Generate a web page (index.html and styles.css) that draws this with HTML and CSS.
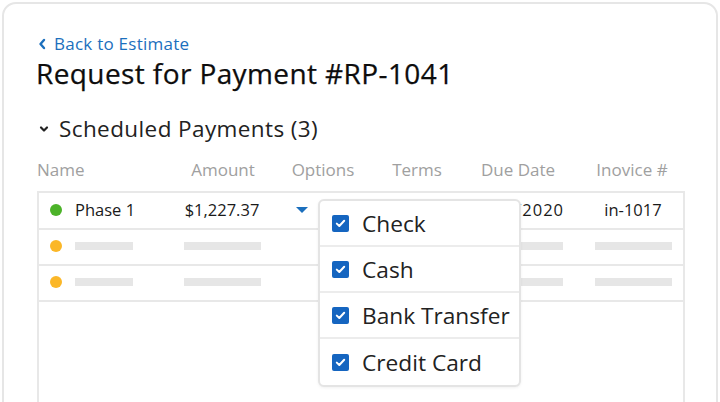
FILE: index.html
```html
<!DOCTYPE html>
<html>
<head>
<meta charset="utf-8">
<link rel="stylesheet" href="styles.css">
</head>
<body>
<div class="card">
  <a class="back"><svg class="back-ico" width="8" height="12" viewBox="0 0 8 12"><path d="M6 2 L2.5 6 L6 10" fill="none" stroke="#1b6fbd" stroke-width="2.4" stroke-linecap="round" stroke-linejoin="round"/></svg>Back to Estimate</a>
  <h1 class="title">Request for Payment #RP-1041</h1>
  <div class="section"><svg class="sec-ico" width="10" height="8" viewBox="0 0 10 8"><path d="M2 2.5 L5 5.5 L8 2.5" fill="none" stroke="#222" stroke-width="2.2" stroke-linecap="round" stroke-linejoin="round"/></svg>Scheduled Payments (3)</div>
  <div class="thead">
    <span class="h-name">Name</span>
    <span class="h-amt">Amount</span>
    <span class="h-opt">Options</span>
    <span class="h-terms">Terms</span>
    <span class="h-due">Due Date</span>
    <span class="h-inv">Inovice #</span>
  </div>
  <div class="table">
    <div class="row">
      <span class="c-name"><i class="dot green"></i>Phase 1</span>
      <span class="c-amt">$1,227.37</span>
      <span class="c-opt"><i class="tri"></i></span>
      <span class="c-due"><span class="due-text">01/01/2020</span></span>
      <span class="c-inv">in-1017</span>
    </div>
    <div class="row">
      <span class="c-name"><i class="dot yellow"></i><i class="bar b1"></i></span>
      <span class="c-amt"><i class="bar b2"></i></span>
      <span class="c-opt"></span>
      <span class="c-due"><i class="bar b3"></i></span>
      <span class="c-inv"><i class="bar b4"></i></span>
    </div>
    <div class="row">
      <span class="c-name"><i class="dot yellow"></i><i class="bar b1"></i></span>
      <span class="c-amt"><i class="bar b2"></i></span>
      <span class="c-opt"></span>
      <span class="c-due"><i class="bar b3"></i></span>
      <span class="c-inv"><i class="bar b4"></i></span>
    </div>
    <div class="menu">
      <div class="item"><i class="cb"><svg width="11" height="9" viewBox="0 0 11 9"><path d="M1.8 4.6 L4.3 7 L9.2 1.8" fill="none" stroke="#fff" stroke-width="2" stroke-linecap="round" stroke-linejoin="round"/></svg></i>Check</div>
      <div class="item"><i class="cb"><svg width="11" height="9" viewBox="0 0 11 9"><path d="M1.8 4.6 L4.3 7 L9.2 1.8" fill="none" stroke="#fff" stroke-width="2" stroke-linecap="round" stroke-linejoin="round"/></svg></i>Cash</div>
      <div class="item"><i class="cb"><svg width="11" height="9" viewBox="0 0 11 9"><path d="M1.8 4.6 L4.3 7 L9.2 1.8" fill="none" stroke="#fff" stroke-width="2" stroke-linecap="round" stroke-linejoin="round"/></svg></i>Bank Transfer</div>
      <div class="item"><i class="cb"><svg width="11" height="9" viewBox="0 0 11 9"><path d="M1.8 4.6 L4.3 7 L9.2 1.8" fill="none" stroke="#fff" stroke-width="2" stroke-linecap="round" stroke-linejoin="round"/></svg></i>Credit Card</div>
    </div>
  </div>
</div>
</body>
</html>
```
FILE: styles.css
```css
* { box-sizing: border-box; }
html, body { margin: 0; padding: 0; background: #fff; overflow: hidden; }
body { width: 720px; height: 402px; font-family: "Open Sans", "Noto Sans", sans-serif; color: #1a1a1a; }
.card {
  margin: 2px 2px 0 2px;
  height: 420px;
  border: 2px solid #e6e6e6;
  border-radius: 14px;
  padding: 30px 0 0 33px;
}
.back {
  display: flex; align-items: center; gap: 8px;
  color: #1b6fbd; font-size: 17px; letter-spacing: 0.25px; line-height: 20px; height: 20px;
}
.back-ico { margin-left: 1px; }
.title {
  margin: 3px 0 0 -1px;
  font-size: 28px; letter-spacing: 0.4px; font-weight: 400; line-height: 32px; color: #0d0d0d;
  -webkit-text-stroke: 0.25px #0d0d0d;
}
.section {
  margin-top: 27px;
  display: flex; align-items: center; gap: 10px;
  font-size: 22.5px; letter-spacing: 0.4px; line-height: 26px; color: #222;
}
.sec-ico { margin-left: 2px; }
.thead {
  margin-top: 14px;
  display: flex; height: 26px; align-items: center;
  color: #a0a0a0; font-size: 17px;
}
.thead span { display: block; flex: none; }
.h-name { width: 136px; }
.h-amt { width: 100px; text-align: center; }
.h-opt { width: 100px; text-align: center; }
.h-terms { width: 88px; text-align: center; }
.h-due { width: 114px; text-align: center; }
.h-inv { width: 114px; text-align: center; }
.table {
  position: relative;
  margin-top: 9px;
  width: 648px;
  height: 230px;
  border: 2px solid #e8e8e8;
  border-bottom: none;
}
.row {
  display: flex; align-items: center;
  height: 36px;
  padding-bottom: 2px;
  border-bottom: 2px solid #e8e8e8;
  font-size: 16.5px; color: #1a1a1a;
}
.row:first-child { height: 37px; }
.row > span { display: flex; align-items: center; flex: none; }
.c-name { width: 144px; padding-left: 11px; }
.c-amt { width: 78px; justify-content: center; }
.c-opt { width: 40px; padding-left: 35px; }
.c-due { width: 262px; justify-content: flex-end; }
.due-text { letter-spacing: 1px; margin-right: -1px; }
.c-inv { width: 78px; justify-content: center; margin-left: 31px; }
.dot { display: inline-block; width: 12px; height: 12px; border-radius: 50%; margin-right: 13px; flex: none; }
.green { background: #4cb329; }
.yellow { background: #fbb728; }
.bar { display: inline-block; height: 8px; background: #e6e6e6; flex: none; }
.b1 { width: 58px; }
.b2 { width: 77px; }
.b3 { width: 43px; }
.b4 { width: 77px; }
.tri {
  flex: none;
  width: 0; height: 0;
  border-left: 6px solid transparent; border-right: 6px solid transparent;
  border-top: 6px solid #1b6fbd;
}
.menu {
  position: absolute; left: 279px; top: 6px;
  width: 203px;
  background: #fff;
  border: 2px solid #e4e4e4;
  border-radius: 6px;
  box-shadow: 0 1px 3px rgba(0,0,0,0.06);
}
.item {
  display: flex; align-items: center;
  height: 46px;
  padding-left: 12px;
  border-bottom: 2px solid #ececec;
  font-size: 22.7px; color: #222;
}
.item:last-child { border-bottom: none; height: 46px; }
.cb {
  display: flex; align-items: center; justify-content: center; flex: none;
  width: 17px; height: 17px; border-radius: 2px;
  background: #1565c0; margin-right: 13px;
}
```
